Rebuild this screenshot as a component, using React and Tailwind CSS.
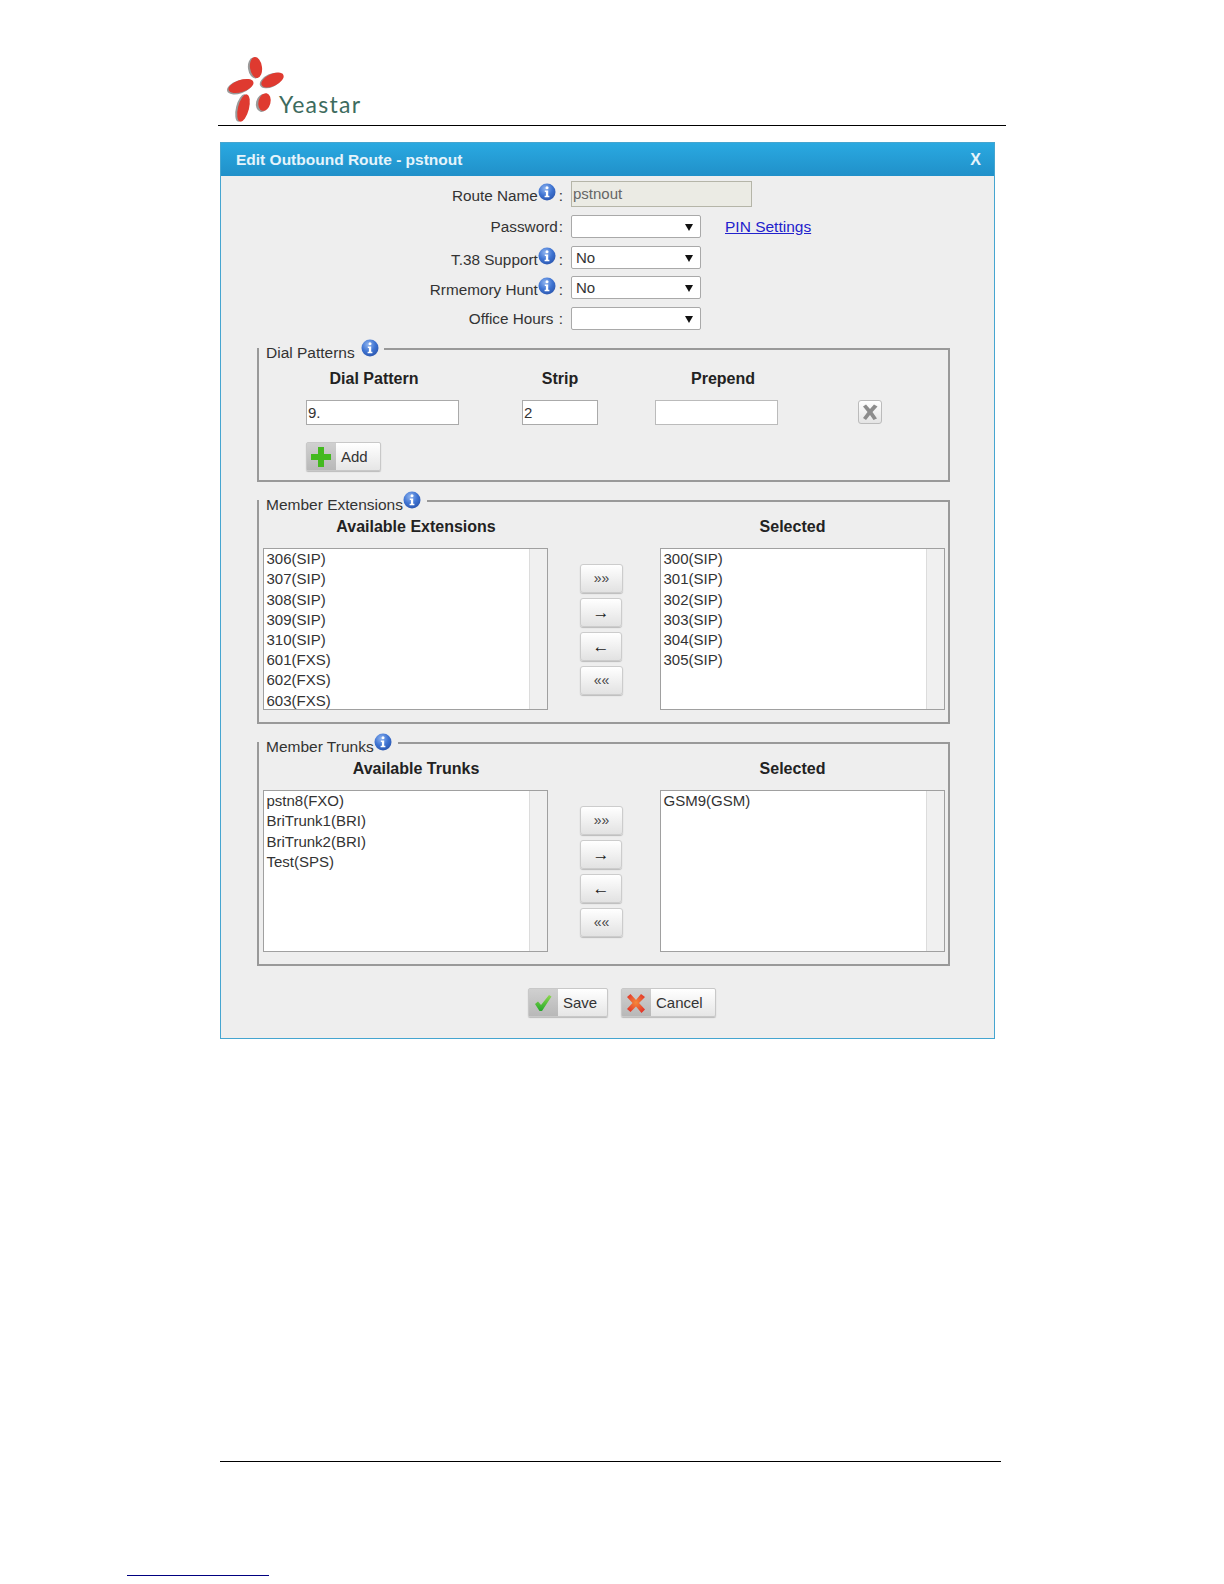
const FONT = "font-['Liberation_Sans',Arial,sans-serif]";

function InfoIcon({ className = '' }) {
  return (
    <svg width="18" height="18" viewBox="0 0 18 18" className={'shrink-0 ' + className}>
      <defs>
        <radialGradient id="infoFill" cx="40%" cy="30%" r="75%">
          <stop offset="0%" stopColor="#8fb4ef" />
          <stop offset="55%" stopColor="#3f74d2" />
          <stop offset="100%" stopColor="#2a55ad" />
        </radialGradient>
      </defs>
      <circle cx="9" cy="9" r="8.5" fill="url(#infoFill)" />
      <circle cx="9" cy="4.8" r="1.5" fill="#fff" />
      <path d="M6.8 7.4h3.4v5.4h1.2v1.5H6.6v-1.5h1.3V8.9H6.8z" fill="#fff" />
    </svg>
  );
}

function Logo() {
  return (
    <svg width="150" height="85" viewBox="218 40 150 85" className="block">
      <g fill="#9a9a9a">
        <ellipse cx="254.5" cy="68" rx="6.5" ry="10.5" transform="rotate(-8 254.5 68)" />
        <ellipse cx="271" cy="80.5" rx="12" ry="6.5" transform="rotate(-25 271 80.5)" />
        <ellipse cx="239.5" cy="87" rx="13" ry="6.5" transform="rotate(-18 239.5 87)" />
        <ellipse cx="241.5" cy="108" rx="5.5" ry="14" transform="rotate(14 241.5 108)" />
        <ellipse cx="262.5" cy="103" rx="6.5" ry="9" transform="rotate(14 262.5 103)" />
      </g>
      <g fill="#df3a30">
        <ellipse cx="256" cy="67.5" rx="6" ry="10.5" transform="rotate(-8 256 67.5)" />
        <ellipse cx="272.5" cy="80" rx="12" ry="6" transform="rotate(-25 272.5 80)" />
        <ellipse cx="241" cy="86" rx="13" ry="6" transform="rotate(-18 241 86)" />
        <ellipse cx="243.5" cy="108" rx="5.5" ry="14" transform="rotate(14 243.5 108)" />
        <ellipse cx="264.5" cy="102" rx="6" ry="9" transform="rotate(14 264.5 102)" />
      </g>
      <text x="279" y="113" fill="#3d6b5e" fontSize="23" letterSpacing="1.3" fontFamily="Lato, sans-serif">Yeastar</text>
    </svg>
  );
}

function FakeSelect({ value }) {
  return (
    <div className="flex h-[23px] w-[130px] items-center justify-between rounded-[2px] border border-[#a9a9a9] bg-white pl-[4px] pr-[7px] text-[15px] text-[#333]">
      <span>{value}</span>
      <svg width="8" height="8" viewBox="0 0 8 8"><path d="M0 1h8L4 8z" fill="#111" /></svg>
    </div>
  );
}

function FormRow({ label, info, mt = '', children }) {
  return (
    <div className={'flex items-center gap-2 ' + mt}>
      <div className="flex h-[23px] w-[342px] items-center justify-end text-[15.3px] text-[#333]">
        <span className={'whitespace-pre ' + (info ? 'mt-[5px]' : 'mt-px')}>{label}</span>
        {info && <InfoIcon className="mb-1" />}
        <span className={info ? 'mt-[5px] ml-[3px]' : 'mt-px ml-[1px]'}>:</span>
      </div>
      {children}
    </div>
  );
}

function Legend({ title, gap, end }) {
  return (
    <legend className={'ml-0 flex h-[20px] items-center pl-[7px] ' + end}>
      <span className="mt-[6px] text-[15.5px] text-[#333]">{title}</span>
      <InfoIcon className={gap} />
    </legend>
  );
}

function ListBox({ items }) {
  return (
    <div className="flex h-[162px] w-[285px] border border-[#a0a0a0] bg-white">
      <div className="flex-1 pl-[2.5px] text-[15px] leading-[20.2px] text-[#333]">
        {items.map((item) => (
          <div key={item}>{item}</div>
        ))}
      </div>
      <div className="w-[18px] border-l border-[#dcdcdc] bg-[#f0f0f0]" />
    </div>
  );
}

function MoveButton({ children, wide, mt = '' }) {
  return (
    <button
      className={
        'flex h-[29px] items-center justify-center rounded-[3px] border border-[#cccccc] bg-gradient-to-b from-white to-[#e2e2e2] text-[14px] text-[#444] shadow-[0_1px_1px_#bbb] ' +
        (wide ? 'w-[43px] ' : 'w-[42px] ') +
        mt
      }
    >
      {children}
    </button>
  );
}

function MemberGroup({ title, legendEnd, left, right, leftItems, rightItems, className = '' }) {
  return (
    <fieldset className={'ml-9 h-[233px] w-[693px] border-2 border-[#999] ' + className}>
      <Legend title={title} gap="mb-[2px]" end={legendEnd} />
      <div className="flex h-[24px] items-center pt-[7px] text-[16px] font-bold text-[#222]">
        <div className="ml-[4px] w-[285px] pl-[21px] text-center">{left}</div>
        <div className="ml-[112px] w-[285px] pr-[20px] text-center">{right}</div>
      </div>
      <div className="mt-[13px] flex pl-[4px]">
        <ListBox items={leftItems} />
        <div className="ml-[32px] flex flex-col pt-[16px]">
          <MoveButton wide>»»</MoveButton>
          <MoveButton mt="mt-[5px]"><span className="text-[17px] text-[#222]">→</span></MoveButton>
          <MoveButton mt="mt-[5px]"><span className="text-[17px] text-[#222]">←</span></MoveButton>
          <MoveButton wide mt="mt-[5px]">««</MoveButton>
        </div>
        <div className="ml-[37px]">
          <ListBox items={rightItems} />
        </div>
      </div>
    </fieldset>
  );
}

function IconButton({ icon, label, width }) {
  return (
    <button className={'flex h-[29px] items-stretch rounded-[2px] border border-[#c8c8c8] bg-gradient-to-b from-white to-[#e6e6e6] text-[15px] text-[#333] shadow-[0_1px_1px_#bbb] ' + width}>
      <span className="flex w-[29px] items-center justify-center bg-gradient-to-b from-[#d0d0d0] to-[#b8b8b8] pr-[2px]">{icon}</span>
      <span className="flex flex-1 items-center pl-[5px]">{label}</span>
    </button>
  );
}

export default function App() {
  return (
    <div className={'h-[1584px] w-[1224px] overflow-hidden bg-white ' + FONT}>
      <div className="ml-[218px] w-[788px] border-b border-black pt-10">
        <Logo />
      </div>

      <div className="ml-[220px] mt-4 h-[897px] w-[775px] border border-[#45a5d0] bg-[#eeeeee]">
        <div className="flex h-[33px] items-center justify-between bg-gradient-to-b from-[#2aa9e1] to-[#2090c9] pl-[15px] pr-[13px] text-[15.5px] font-bold text-[#e6f4fb]">
          <span>Edit Outbound Route - pstnout</span>
          <span className="text-[16px]">X</span>
        </div>

        <div className="pt-[5px]">
          <FormRow label="Route Name" info>
            <div className="flex h-[26px] w-[181px] items-center border border-[#b5b5a8] bg-[#ebebe4] pl-[1px] text-[15px] text-[#666]">pstnout</div>
          </FormRow>
          <FormRow label="Password" mt="mt-2">
            <FakeSelect value="" />
            <a href="#" className="ml-[16px] text-[15.5px] text-[#2222cc] underline">PIN Settings</a>
          </FormRow>
          <FormRow label="T.38 Support" info mt="mt-2">
            <FakeSelect value="No" />
          </FormRow>
          <FormRow label="Rrmemory Hunt" info mt="mt-[7px]">
            <FakeSelect value="No" />
          </FormRow>
          <FormRow label="Office Hours " mt="mt-2">
            <FakeSelect value="" />
          </FormRow>
        </div>

        <fieldset className="ml-9 mt-[9px] h-[143px] w-[693px] border-2 border-[#999]">
          <Legend title="Dial Patterns" gap="ml-[6px] mb-[2px]" end="pr-[5px]" />
          <div className="mt-[8px] flex h-[24px] items-center text-[16px] font-bold text-[#222]">
            <div className="ml-[47px] w-[136px] text-center">Dial Pattern</div>
            <div className="ml-[80px] w-[76px] text-center">Strip</div>
            <div className="ml-[57px] w-[136px] text-center">Prepend</div>
          </div>
          <div className="mt-[9px] flex items-start text-[15px] text-[#333]">
            <div className="ml-[47px] flex h-[25px] w-[153px] items-center border border-[#aaa] bg-white pl-[1px]">9.</div>
            <div className="ml-[63px] flex h-[25px] w-[76px] items-center border border-[#aaa] bg-white pl-[1px]">2</div>
            <div className="ml-[57px] h-[25px] w-[123px] border border-[#bbb] bg-white" />
            <div className="ml-[80px] flex h-[24px] w-[24px] items-center justify-center rounded-[3px] border border-[#bbb] bg-gradient-to-b from-white to-[#e4e4e4]">
              <svg width="18" height="18" viewBox="0 0 18 18"><path d="M2 3.5 5 1.5 9 6l4-4.5 3.5 2L11.5 9l4.5 6.5-3.5 1.5L9 12l-4 5-3-2 4.5-6z" fill="#8c8c8c" /></svg>
            </div>
          </div>
          <div className="ml-[47px] mt-[17px]">
            <IconButton
              width="w-[75px]"
              label="Add"
              icon={<svg width="22" height="22" viewBox="0 0 22 22"><path d="M8 1h6v7h7v6h-7v7H8v-7H1V8h7z" fill="#43b91f" /></svg>}
            />
          </div>
        </fieldset>

        <MemberGroup
          className="mt-[9px]"
          title="Member Extensions"
          legendEnd="pr-[6px]"
          left="Available Extensions"
          right="Selected"
          leftItems={['306(SIP)', '307(SIP)', '308(SIP)', '309(SIP)', '310(SIP)', '601(FXS)', '602(FXS)', '603(FXS)']}
          rightItems={['300(SIP)', '301(SIP)', '302(SIP)', '303(SIP)', '304(SIP)', '305(SIP)']}
        />
        <MemberGroup
          className="mt-[9px]"
          title="Member Trunks"
          legendEnd="pr-[6px]"
          left="Available Trunks"
          right="Selected"
          leftItems={['pstn8(FXO)', 'BriTrunk1(BRI)', 'BriTrunk2(BRI)', 'Test(SPS)']}
          rightItems={['GSM9(GSM)']}
        />

        <div className="ml-[307px] mt-[22px] flex gap-[13px]">
          <IconButton
            width="w-[80px]"
            label="Save"
            icon={
              <svg width="20" height="20" viewBox="0 0 20 20">
                <defs>
                  <linearGradient id="saveFill" x1="0" y1="0" x2="0" y2="1">
                    <stop offset="0%" stopColor="#8fd94f" />
                    <stop offset="100%" stopColor="#23a82a" />
                  </linearGradient>
                </defs>
                <path d="M2 11l3-2.5 3 3.5L16 2l2.5 1.5L9 18h-2.5z" fill="url(#saveFill)" />
              </svg>
            }
          />
          <IconButton
            width="w-[95px]"
            label="Cancel"
            icon={
              <svg width="22" height="22" viewBox="0 0 22 22">
                <defs>
                  <radialGradient id="cancelFill" cx="50%" cy="45%" r="60%">
                    <stop offset="0%" stopColor="#f5883a" />
                    <stop offset="100%" stopColor="#e2352a" />
                  </radialGradient>
                </defs>
                <path d="M2 5l3.5-3L11 8l5-6 4 3-6 6 6 6.500-3.500 3.500L11 14.500 5.500 20 2 17l5.500-6z" fill="url(#cancelFill)" />
              </svg>
            }
          />
        </div>
      </div>

      <div className="ml-[220px] mt-[422px] h-px w-[781px] bg-black" />
      <div className="ml-[127px] mt-[113px] h-px w-[142px] bg-[#000080]" />
    </div>
  );
}
